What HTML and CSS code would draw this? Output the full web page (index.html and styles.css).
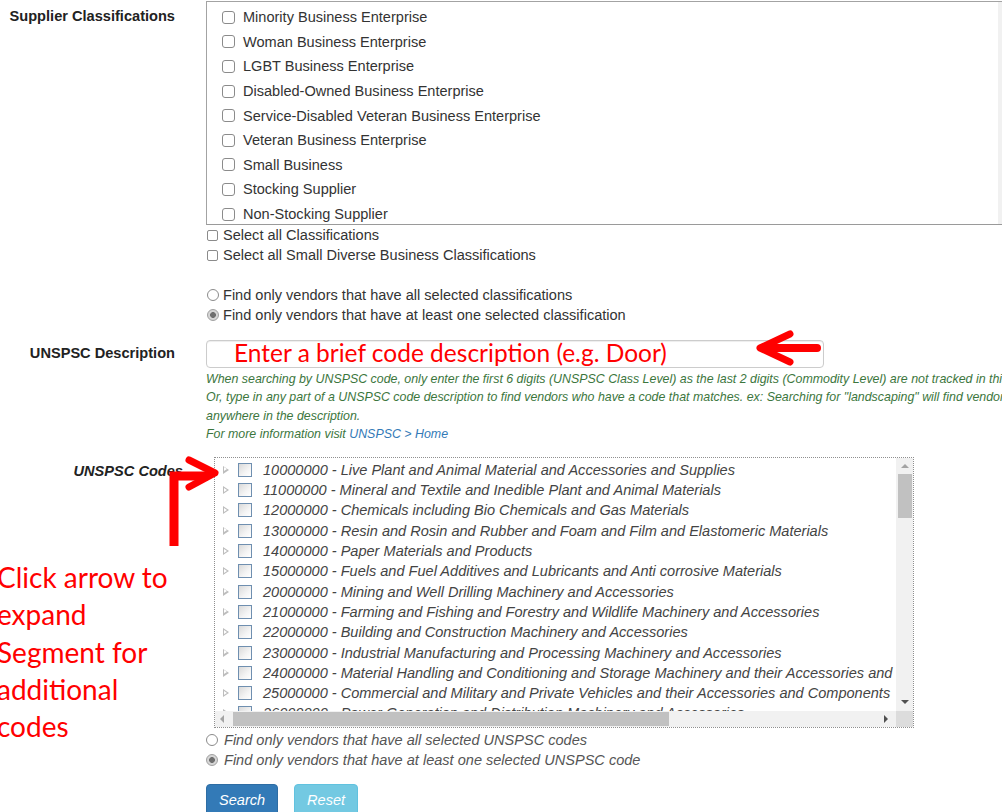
FILE: index.html
```html
<!DOCTYPE html>
<html lang="en">
<head>
<meta charset="utf-8">
<title>Supplier Search</title>
<link rel="stylesheet" href="styles.css">
</head>
<body>
<form class="search-form">

  <div class="form-row">
    <div class="row-label">Supplier Classifications</div>
    <div class="row-field">
      <div class="class-box">
        <ul class="class-list">
          <li><label><input type="checkbox" class="cb">Minority Business Enterprise</label></li>
          <li><label><input type="checkbox" class="cb">Woman Business Enterprise</label></li>
          <li><label><input type="checkbox" class="cb">LGBT Business Enterprise</label></li>
          <li><label><input type="checkbox" class="cb">Disabled-Owned Business Enterprise</label></li>
          <li><label><input type="checkbox" class="cb">Service-Disabled Veteran Business Enterprise</label></li>
          <li><label><input type="checkbox" class="cb">Veteran Business Enterprise</label></li>
          <li><label><input type="checkbox" class="cb">Small Business</label></li>
          <li><label><input type="checkbox" class="cb">Stocking Supplier</label></li>
          <li><label><input type="checkbox" class="cb">Non-Stocking Supplier</label></li>
        </ul>
        <div class="box-track"></div>
      </div>
      <label class="line"><input type="checkbox" class="cb-sm">Select all Classifications</label>
      <label class="line"><input type="checkbox" class="cb-sm">Select all Small Diverse Business Classifications</label>
      <div class="line"></div>
      <label class="line"><input type="radio" name="class-match" class="rd">Find only vendors that have all selected classifications</label>
      <label class="line"><input type="radio" name="class-match" class="rd" checked>Find only vendors that have at least one selected classification</label>
    </div>
  </div>

  <div class="form-row desc-row">
    <div class="row-label desc-label">UNSPSC Description</div>
    <div class="row-field">
      <div class="desc-input-wrap">
        <input type="text" class="desc-input" aria-label="UNSPSC Description">
        <span class="note note-input">Enter a brief code description (e.g. Door)</span>
      </div>
      <div class="help">
        <div>When searching by UNSPSC code, only enter the first 6 digits (UNSPSC Class Level) as the last 2 digits (Commodity Level) are not tracked in this system.</div>
        <div>Or, type in any part of a UNSPSC code description to find vendors who have a code that matches. ex: Searching for "landscaping" will find vendors with landscaping</div>
        <div>anywhere in the description.</div>
        <div>For more information visit <a href="#" class="help-link">UNSPSC &gt; Home</a></div>
      </div>
    </div>
  </div>

  <div class="form-row codes-row">
    <div class="row-label codes-label">UNSPSC Codes</div>
    <div class="row-field">
      <div class="tree-box">
        <div class="tree-view">
          <ul class="tree">
            <li><span class="exp"></span><span class="tcb"></span>10000000 - Live Plant and Animal Material and Accessories and Supplies</li>
            <li><span class="exp"></span><span class="tcb"></span>11000000 - Mineral and Textile and Inedible Plant and Animal Materials</li>
            <li><span class="exp"></span><span class="tcb"></span>12000000 - Chemicals including Bio Chemicals and Gas Materials</li>
            <li><span class="exp"></span><span class="tcb"></span>13000000 - Resin and Rosin and Rubber and Foam and Film and Elastomeric Materials</li>
            <li><span class="exp"></span><span class="tcb"></span>14000000 - Paper Materials and Products</li>
            <li><span class="exp"></span><span class="tcb"></span>15000000 - Fuels and Fuel Additives and Lubricants and Anti corrosive Materials</li>
            <li><span class="exp"></span><span class="tcb"></span>20000000 - Mining and Well Drilling Machinery and Accessories</li>
            <li><span class="exp"></span><span class="tcb"></span>21000000 - Farming and Fishing and Forestry and Wildlife Machinery and Accessories</li>
            <li><span class="exp"></span><span class="tcb"></span>22000000 - Building and Construction Machinery and Accessories</li>
            <li><span class="exp"></span><span class="tcb"></span>23000000 - Industrial Manufacturing and Processing Machinery and Accessories</li>
            <li><span class="exp"></span><span class="tcb"></span>24000000 - Material Handling and Conditioning and Storage Machinery and their Accessories and Supplies</li>
            <li><span class="exp"></span><span class="tcb"></span>25000000 - Commercial and Military and Private Vehicles and their Accessories and Components</li>
            <li><span class="exp"></span><span class="tcb"></span>26000000 - Power Generation and Distribution Machinery and Accessories</li>
          </ul>
        </div>
        <div class="vscroll">
          <span class="arr arr-up"></span>
          <span class="vthumb"></span>
          <span class="arr arr-down"></span>
        </div>
        <div class="hscroll">
          <span class="arr arr-left"></span>
          <span class="hthumb"></span>
          <span class="arr arr-right"></span>
        </div>
        <div class="corner"></div>
      </div>
      <label class="line code-line"><input type="radio" name="code-match" class="rd rd-code">Find only vendors that have all selected UNSPSC codes</label>
      <label class="line code-line"><input type="radio" name="code-match" class="rd rd-code" checked>Find only vendors that have at least one selected UNSPSC code</label>
      <div class="actions">
        <button type="button" class="btn btn-search">Search</button>
        <button type="button" class="btn btn-reset">Reset</button>
      </div>
    </div>
  </div>

</form>

<!-- callouts drawn over the form -->
<svg class="callout callout-desc" width="80" height="44" viewBox="750 328 80 44" aria-hidden="true">
  <path d="M817 348 H768" fill="none" stroke="#ff0000" stroke-width="8" stroke-linecap="round"/>
  <polyline points="790,334 760,348 790,362" fill="none" stroke="#ff0000" stroke-width="7" stroke-linecap="round" stroke-linejoin="round"/>
</svg>
<svg class="callout callout-codes" width="70" height="100" viewBox="160 450 70 100" aria-hidden="true">
  <path d="M174 546 V476 H208" fill="none" stroke="#ff0000" stroke-width="9"/>
  <polyline points="189,460 215,473 189,487" fill="none" stroke="#ff0000" stroke-width="7" stroke-linecap="round" stroke-linejoin="round"/>
</svg>
<div class="note note-side">Click arrow to<br>expand<br>Segment for<br>additional<br>codes</div>
</body>
</html>
```

FILE: styles.css
```css
html {
  overflow: hidden;
}

body {
  margin: 0;
  position: relative;
  font-family: "Liberation Sans", Arial, sans-serif;
  font-size: 14.56px;
  color: #333;
  background: #fff;
}

ul {
  list-style: none;
  margin: 0;
  padding: 0;
}

.search-form {
  padding-top: 1px;
}

.form-row {
  display: flex;
  align-items: flex-start;
}

.row-label {
  flex: none;
  width: 175px;
  margin-right: 31px;
  text-align: right;
  font-weight: bold;
  font-size: 14.6px;
  line-height: 18px;
  padding-top: 6px;
  color: #222;
  white-space: nowrap;
}

.row-field {
  flex: none;
  display: flex;
  flex-direction: column;
  align-items: flex-start;
}

/* classification list box */
.class-box {
  display: flex;
  width: 810px;
  height: 224px;
  box-sizing: border-box;
  border: 1px solid #a3a3a3;
  border-bottom-color: #9a9a9a;
  overflow: hidden;
}

.class-list {
  flex: 1;
  padding: 3px 0 0 15px;
}

.class-list li {
  height: 24.6px;
}

.class-list label {
  display: flex;
  align-items: center;
  height: 100%;
}

.box-track {
  flex: none;
  width: 17px;
  background: #f1f1f1;
}

.cb,
.cb-sm,
.rd {
  appearance: none;
  -webkit-appearance: none;
  flex: none;
  box-sizing: border-box;
  background: #fff;
}

.cb {
  width: 13px;
  height: 13px;
  margin: 0 8px 0 0;
  border: 1px solid #8b8b8b;
  border-radius: 3px;
}

.line {
  display: flex;
  align-items: center;
  height: 20px;
  white-space: nowrap;
}

.cb-sm {
  width: 11px;
  height: 11px;
  margin: 0 5px 0 1px;
  border: 1px solid #8b8b8b;
  border-radius: 2px;
}

.rd {
  width: 12px;
  height: 12px;
  margin: 0 4px 0 1px;
  border: 1px solid #8b8b8b;
  border-radius: 50%;
}

.rd:checked {
  border-color: #a0a0a0;
  background: radial-gradient(circle, #6f6f6f 0 2.6px, #d6d6d6 3.2px);
}

/* description row */
.desc-row {
  margin-top: 15px;
}

.desc-label {
  padding-top: 4px;
}

.desc-input-wrap {
  position: relative;
  width: 618px;
  height: 28px;
}

.desc-input {
  display: block;
  width: 100%;
  height: 100%;
  box-sizing: border-box;
  margin: 0;
  border: 1px solid #ccc;
  border-radius: 4px;
  box-shadow: inset 0 1px 1px rgba(0, 0, 0, 0.075);
  background: #fff;
}

.note {
  color: #ff0000;
  font-family: Lato, "Open Sans", sans-serif;
  pointer-events: none;
  white-space: nowrap;
}

.note-input {
  position: absolute;
  left: 28px;
  top: 0;
  line-height: 25px;
  font-size: 24.5px;
}

.help {
  margin-top: 2px;
  font-size: 12.4px;
  font-style: italic;
  line-height: 18.3px;
  color: #3c763d;
  white-space: nowrap;
}

.help-link {
  color: #337ab7;
  text-decoration: none;
}

/* unspsc code tree */
.codes-row {
  margin-top: 14px;
}

.codes-label {
  width: 183px;
  margin-right: 23px;
  padding-top: 5px;
  font-style: italic;
}

.tree-box {
  display: grid;
  grid-template-columns: 681px 17px;
  grid-template-rows: 253px 16px;
  margin-left: 8px;
  border: 1px dotted #8f8f8f;
}

.tree-view {
  overflow: hidden;
  background: #fff;
}

.tree {
  padding: 1.5px 0 0 7px;
  font-style: italic;
  color: #444;
}

.tree li {
  display: flex;
  align-items: center;
  height: 20.3px;
  white-space: nowrap;
}

.exp {
  flex: none;
  width: 0;
  height: 0;
  margin: 0 9px 0 1px;
  border-top: 4px solid transparent;
  border-bottom: 4px solid transparent;
  border-left: 6px solid #bdbdbd;
  position: relative;
}

.exp::after {
  content: "";
  position: absolute;
  left: -5px;
  top: -2.5px;
  border-top: 2.5px solid transparent;
  border-bottom: 2.5px solid transparent;
  border-left: 3.5px solid #fff;
}

.tcb {
  flex: none;
  width: 14px;
  height: 14px;
  box-sizing: border-box;
  margin-right: 11px;
  border: 1px solid #6f8fb0;
  background: linear-gradient(135deg, #d9d9d9 0%, #f4f4f4 60%, #fff 100%);
}

.vscroll,
.hscroll {
  position: relative;
  background: #f1f1f1;
}

.corner {
  background: #dcdcdc;
}

.vthumb {
  position: absolute;
  left: 2px;
  right: 1px;
  top: 16px;
  height: 44px;
  background: #c1c1c1;
}

.hthumb {
  position: absolute;
  top: 1px;
  bottom: 1px;
  left: 18px;
  width: 436px;
  background: #c1c1c1;
}

.arr {
  position: absolute;
  width: 0;
  height: 0;
}

.arr-up {
  left: 5px;
  top: 6px;
  border-left: 4px solid transparent;
  border-right: 4px solid transparent;
  border-bottom: 4px solid #a3a3a3;
}

.arr-down {
  left: 5px;
  bottom: 7px;
  border-left: 4px solid transparent;
  border-right: 4px solid transparent;
  border-top: 4px solid #505050;
}

.arr-left {
  left: 5px;
  top: 4px;
  border-top: 4px solid transparent;
  border-bottom: 4px solid transparent;
  border-right: 4px solid #a3a3a3;
}

.arr-right {
  right: 8px;
  top: 4px;
  border-top: 4px solid transparent;
  border-bottom: 4px solid transparent;
  border-left: 4px solid #505050;
}

.code-line {
  font-style: italic;
  color: #555;
}

.code-line:first-of-type {
  margin-top: 2px;
}

.rd-code {
  margin: 0 6px 0 0;
}

.actions {
  display: flex;
  gap: 16px;
  margin-top: 14px;
}

.btn {
  height: 32px;
  padding: 0 12px;
  border: 1px solid transparent;
  border-radius: 4px;
  font-family: inherit;
  font-size: 14.56px;
  font-style: italic;
  color: #fff;
}

.btn-search {
  background: #337ab7;
  border-color: #2e6da4;
}

.btn-reset {
  background: #5bc0de;
  border-color: #46b8da;
  opacity: 0.85;
}

/* red callouts */
.callout {
  position: absolute;
}

.callout-desc {
  left: 750px;
  top: 328px;
}

.callout-codes {
  left: 160px;
  top: 450px;
}

.note-side {
  position: absolute;
  left: -3px;
  top: 559px;
  font-size: 28px;
  line-height: 37.3px;
}
```
